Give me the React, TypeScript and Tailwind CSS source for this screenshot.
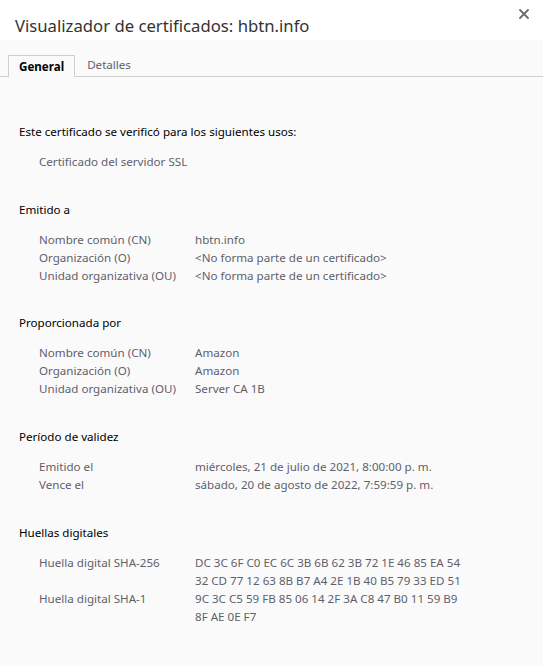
import React from 'react';

type Row = { label: string; value: string[] };

const sections: { title: string; gap: string; rows: Row[] }[] = [
  {
    title: 'Emitido a',
    gap: 'mt-[30px]',
    rows: [
      { label: 'Nombre común (CN)', value: ['hbtn.info'] },
      { label: 'Organización (O)', value: ['<No forma parte de un certificado>'] },
      { label: 'Unidad organizativa (OU)', value: ['<No forma parte de un certificado>'] },
    ],
  },
  {
    title: 'Proporcionada por',
    gap: 'mt-[29px]',
    rows: [
      { label: 'Nombre común (CN)', value: ['Amazon'] },
      { label: 'Organización (O)', value: ['Amazon'] },
      { label: 'Unidad organizativa (OU)', value: ['Server CA 1B'] },
    ],
  },
  {
    title: 'Período de validez',
    gap: 'mt-[30px]',
    rows: [
      { label: 'Emitido el', value: ['miércoles, 21 de julio de 2021, 8:00:00 p. m.'] },
      { label: 'Vence el', value: ['sábado, 20 de agosto de 2022, 7:59:59 p. m.'] },
    ],
  },
  {
    title: 'Huellas digitales',
    gap: 'mt-[30px]',
    rows: [
      {
        label: 'Huella digital SHA-256',
        value: ['DC 3C 6F C0 EC 6C 3B 6B 62 3B 72 1E 46 85 EA 54', '32 CD 77 12 63 8B B7 A4 2E 1B 40 B5 79 33 ED 51'],
      },
      {
        label: 'Huella digital SHA-1',
        value: ['9C 3C C5 59 FB 85 06 14 2F 3A C8 47 B0 11 59 B9', '8F AE 0E F7'],
      },
    ],
  },
];

export default function App() {
  return (
    <div className="w-[543px] h-[666px] bg-[#fafafa] font-['Noto_Sans',sans-serif] text-[11.6px] leading-[18px] overflow-hidden">
      {/* header */}
      <div className="relative h-10 bg-white">
        <h1 className="pl-[15px] pt-[13px] text-[16.7px] leading-[26px] text-[#333]">
          Visualizador de certificados: hbtn.info
        </h1>
        <button className="absolute right-[12px] top-[7px] w-[14px] h-[14px]">
          <svg viewBox="0 0 14 14" width="14" height="14">
            <path d="M3 3 L11 11 M11 3 L3 11" stroke="#6b6b6b" strokeWidth="1.8" strokeLinecap="round" />
          </svg>
        </button>
      </div>

      {/* tabs */}
      <div className="flex items-end pl-2 pt-[14px] border-b border-[#cfcfcf]">
        <div className="px-[10px] h-[22px] -mb-px border border-b-0 border-[#cfcfcf] bg-[#fafafa] font-bold text-black flex items-center">
          General
        </div>
        <div className="px-3 h-[22px] flex items-center text-[#5f5f6b]">Detalles</div>
      </div>

      {/* body */}
      <div className="pl-[19px] pt-[46px]">
        <div className="text-black">Este certificado se verificó para los siguientes usos:</div>
        <div className="pl-5 mt-3 text-[#5f5f6b]">Certificado del servidor SSL</div>

        {sections.map((s) => (
          <div key={s.title} className={s.gap}>
            <div className="text-black">{s.title}</div>
            <div className="pl-5 mt-3 text-[#5f5f6b]">
              {s.rows.map((r) => (
                <div key={r.label} className="flex">
                  <div className="w-[156px] shrink-0">{r.label}</div>
                  <div>
                    {r.value.map((v) => (
                      <div key={v}>{v}</div>
                    ))}
                  </div>
                </div>
              ))}
            </div>
          </div>
        ))}
      </div>
    </div>
  );
}
